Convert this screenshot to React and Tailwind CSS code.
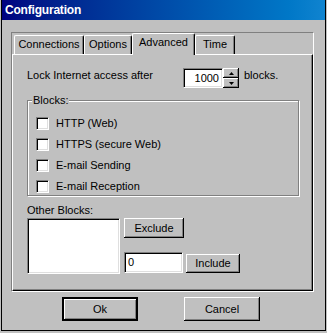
import React from 'react';

const sunken =
  'bg-white border-t border-l border-[#808080] border-r border-b border-r-white border-b-white shadow-[inset_1px_1px_0_#000,inset_-1px_-1px_0_#dfdfdf]';
const raised =
  'bg-[#c0c0c0] shadow-[inset_-1px_-1px_0_#000,inset_1px_1px_0_#fff,inset_-2px_-2px_0_#808080]';

function Tab({ label, width, active }) {
  if (active) {
    return (
      <div
        className={`${width} relative z-10 -mb-[1px] h-[22px] bg-[#c0c0c0] border-t border-l border-white border-r border-r-black rounded-t-[2px] shadow-[inset_-1px_0_0_#808080] flex justify-center pt-[2px] leading-[13px]`}
      >
        {label}
      </div>
    );
  }
  return (
    <div
      className={`${width} h-[19px] bg-[#c0c0c0] border-t border-l border-white border-r border-r-black rounded-t-[2px] shadow-[inset_-1px_0_0_#808080] flex justify-center pt-[2px] leading-[13px]`}
    >
      {label}
    </div>
  );
}

function Check({ label }) {
  return (
    <div className="flex items-center h-[13px]">
      <div className={`w-[13px] h-[13px] ${sunken}`} />
      <span className="ml-[7px] leading-[13px]">{label}</span>
    </div>
  );
}

export default function App() {
  return (
    <div className="w-[327px] h-[333px] bg-[#c0c0c0] font-['Liberation_Sans',Arial,sans-serif] text-[11px] text-black">
      <div className="ml-[1px] w-[325px] h-[331px] border-x border-b border-black flex flex-col">
        {/* title bar */}
        <div className="h-[20px] bg-gradient-to-r from-[#000080] to-[#1084d0] text-white font-bold text-[12px] tracking-[-0.2px] pl-[3px] flex items-center">
          Configuration
        </div>

        {/* tab frame */}
        <div className="ml-[9px] mt-[12px] w-[303px] h-[260px] border-t border-l border-[#808080] border-r border-b border-r-white border-b-white flex flex-col">
          <div className="h-[21px] flex items-end pl-[2px]">
            <Tab label="Connections" width="w-[70px]" />
            <Tab label="Options" width="w-[48px]" />
            <Tab label="Advanced" width="w-[63px]" active />
            <Tab label="Time" width="w-[40px]" />
          </div>

          <div className="flex-1 border-t border-l border-white border-r border-b border-r-black border-b-black shadow-[inset_-1px_-1px_0_#808080] pl-[14px] pt-[13px]">
            {/* lock row */}
            <div className="flex h-[20px]">
              <div className="w-[156px] pt-[1px] leading-[13px]">Lock Internet access after</div>
              <div className={`w-[40px] h-[20px] ${sunken} text-right pr-[3px] pt-[3px] leading-[13px]`}>1000</div>
              <div className="w-[16px] h-[20px] flex flex-col">
                <div className={`h-[10px] ${raised} flex items-center justify-center`}>
                  <svg width="5" height="3" viewBox="0 0 5 3"><path d="M2.5 0 L5 3 L0 3 Z" fill="#000" /></svg>
                </div>
                <div className={`h-[10px] ${raised} flex items-center justify-center`}>
                  <svg width="5" height="3" viewBox="0 0 5 3"><path d="M0 0 L5 0 L2.5 3 Z" fill="#000" /></svg>
                </div>
              </div>
              <div className="ml-[5px] pt-[1px] leading-[13px]">blocks.</div>
            </div>

            {/* blocks group */}
            <div className="relative mt-[12px] w-[272px] h-[96px] border border-[#808080] shadow-[inset_1px_1px_0_#fff,1px_1px_0_#fff] pl-[8px] pt-[16px] flex flex-col gap-[8px]">
              <span className="absolute left-[4px] -top-[7px] px-[1px] bg-[#c0c0c0] leading-[13px]">Blocks:</span>
              <Check label="HTTP (Web)" />
              <Check label="HTTPS (secure Web)" />
              <Check label="E-mail Sending" />
              <Check label="E-mail Reception" />
            </div>

            <div className="mt-[8px] leading-[13px]">Other Blocks:</div>
            <div className="mt-[1px] flex">
              <div className={`w-[93px] h-[56px] ${sunken}`} />
              <div className="ml-[4px] flex flex-col">
                <button className={`w-[60px] h-[20px] ${raised} leading-[13px]`}>Exclude</button>
                <div className="mt-[14px] flex">
                  <div className={`w-[59px] h-[21px] ${sunken} pl-[3px] pt-[3px] leading-[13px]`}>0</div>
                  <button className={`ml-[3px] mt-[2px] w-[54px] h-[19px] ${raised} leading-[13px]`}>Include</button>
                </div>
              </div>
            </div>
          </div>
        </div>

        {/* dialog buttons */}
        <div className="mt-[5px] pl-[60px] flex">
          <button className="w-[76px] h-[24px] border-2 border-black bg-[#c0c0c0] shadow-[inset_1px_1px_0_#fff,inset_-1px_-1px_0_#808080] leading-[13px]">
            Ok
          </button>
          <button className={`ml-[46px] w-[76px] h-[24px] ${raised} leading-[13px]`}>Cancel</button>
        </div>
      </div>
    </div>
  );
}
